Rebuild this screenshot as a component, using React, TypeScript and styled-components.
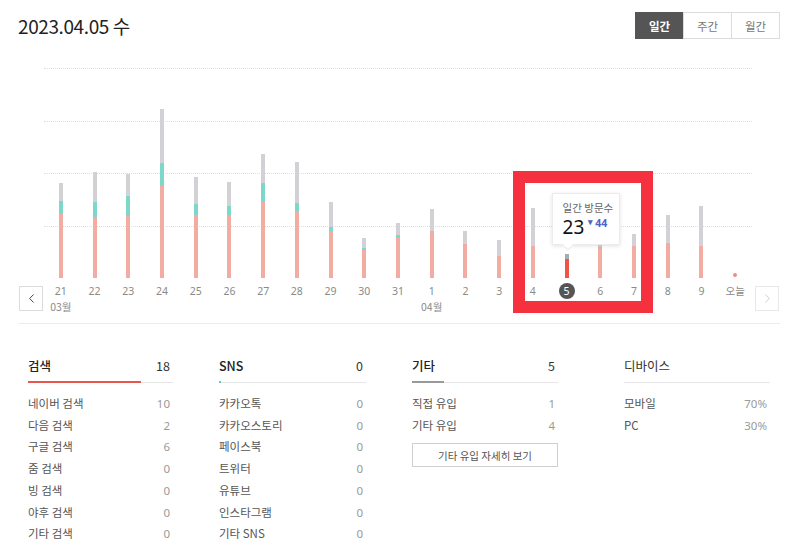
import React from "react"
import styled, {createGlobalStyle} from "styled-components"
import {ChevronLeft, ChevronRight} from "lucide-react"

//region data
type Day = {label: string; red: number; teal: number; gray: number; month?: string; today?: boolean; selected?: boolean}

const days: Day[] = [
	{label: "21", red: 64, teal: 13, gray: 18, month: "03월"},
	{label: "22", red: 61, teal: 15, gray: 30},
	{label: "23", red: 62, teal: 20, gray: 22},
	{label: "24", red: 92, teal: 23, gray: 54},
	{label: "25", red: 63, teal: 11, gray: 27},
	{label: "26", red: 63, teal: 9, gray: 24},
	{label: "27", red: 76, teal: 19, gray: 29},
	{label: "28", red: 67, teal: 8, gray: 41},
	{label: "29", red: 47, teal: 4, gray: 25},
	{label: "30", red: 28, teal: 2, gray: 10},
	{label: "31", red: 40, teal: 3, gray: 12},
	{label: "1", red: 47, teal: 0, gray: 22, month: "04월"},
	{label: "2", red: 34, teal: 0, gray: 13},
	{label: "3", red: 22, teal: 0, gray: 16},
	{label: "4", red: 32, teal: 0, gray: 38},
	{label: "5", red: 19, teal: 0, gray: 5, selected: true},
	{label: "6", red: 31, teal: 0, gray: 40},
	{label: "7", red: 32, teal: 0, gray: 12},
	{label: "8", red: 35, teal: 0, gray: 28},
	{label: "9", red: 32, teal: 0, gray: 40},
	{label: "오늘", red: 0, teal: 0, gray: 0, today: true},
]

type StatGroup = {
	title: string
	total?: number
	color: string
	width: number
	offset: number
	rows: [string, string][]
	more?: string
}

const groups: StatGroup[] = [
	{
		title: "검색",
		total: 18,
		color: "#e8574b",
		width: 145,
		offset: 0,
		rows: [
			["네이버 검색", "10"],
			["다음 검색", "2"],
			["구글 검색", "6"],
			["줌 검색", "0"],
			["빙 검색", "0"],
			["야후 검색", "0"],
			["기타 검색", "0"],
		],
	},
	{
		title: "SNS",
		total: 0,
		color: "#5fcfbd",
		width: 147,
		offset: 46,
		rows: [
			["카카오톡", "0"],
			["카카오스토리", "0"],
			["페이스북", "0"],
			["트위터", "0"],
			["유튜브", "0"],
			["인스타그램", "0"],
			["기타 SNS", "0"],
		],
	},
	{
		title: "기타",
		total: 5,
		color: "#9a9a9a",
		width: 146,
		offset: 46,
		rows: [
			["직접 유입", "1"],
			["기타 유입", "4"],
		],
		more: "기타 유입 자세히 보기",
	},
	{
		title: "디바이스",
		color: "#e6e6e6",
		width: 146,
		offset: 66,
		rows: [
			["모바일", "70%"],
			["PC", "30%"],
		],
	},
]
const grandTotal = 23
//endregion

//region atoms
const GlobalStyle = createGlobalStyle`
	* { box-sizing: border-box; }
	body {
		margin: 0;
		background: #fff;
		font-family: "Noto Sans CJK KR", "Noto Sans", sans-serif;
		color: #333;
	}
`

const Page = styled.div`
	position: relative;
	width: 800px;
	height: 551px;
	padding: 12px 20px 0 18px;
	overflow: hidden;
`

const Header = styled.header`
	display: flex;
	align-items: center;
	justify-content: space-between;
	height: 27px;
`

const Title = styled.h1`
	margin: 0;
	font-size: 19px;
	font-weight: 400;
	letter-spacing: -0.4px;
	color: #222;
	line-height: 27px;
`

const Segmented = styled.div`
	display: flex;
`

const SegButton = styled.button<{$active?: boolean}>`
	width: 49px;
	height: 27px;
	border: 1px solid ${({$active}) => ($active ? "#555" : "#dcdcdc")};
	margin-left: -1px;
	background: ${({$active}) => ($active ? "#555" : "#fff")};
	color: ${({$active}) => ($active ? "#fff" : "#777")};
	font-family: inherit;
	font-size: 11.5px;
	font-weight: ${({$active}) => ($active ? 700 : 400)};
	padding: 0;
`
//endregion

//region chart
const Chart = styled.section`
	display: flex;
	margin-top: 29px;
`

const NavCell = styled.div<{$right?: boolean}>`
	display: flex;
	align-items: flex-end;
	margin: ${({$right}) => ($right ? "0 0 4px 3px" : "0 1px 4px 1px")};
`

const NavButton = styled.button<{$disabled?: boolean}>`
	display: grid;
	place-content: center;
	width: 24px;
	height: 25px;
	padding: 0;
	border: 1px solid ${({$disabled}) => ($disabled ? "#e8e8e8" : "#dcdcdc")};
	background: #fff;
	color: ${({$disabled}) => ($disabled ? "#cfcfcf" : "#444")};
`

const ChartBody = styled.div`
	width: 708px;
`

const Plot = styled.div`
	display: grid;
	height: 210px;
`

const GridLines = styled.div`
	grid-area: 1 / 1;
	display: grid;
	grid-template-rows: repeat(4, 1fr);
`

const GridLine = styled.div`
	border-top: 1px dotted #dedede;
`

const Columns = styled.div`
	grid-area: 1 / 1;
	display: grid;
	grid-template-columns: repeat(21, 1fr);
`

const BarColumn = styled.div`
	position: relative;
	display: flex;
	flex-direction: column;
	align-items: center;
	justify-content: flex-end;
`

const Segment = styled.div<{$color: string}>`
	width: 4px;
	background: ${({$color}) => $color};
`

const TodayDot = styled.div`
	width: 4px;
	height: 4px;
	margin-bottom: 1px;
	border-radius: 50%;
	background: #ef8b80;
`

const Tooltip = styled.div`
	position: absolute;
	left: calc(50% - 15px);
	bottom: 33px;
	z-index: 2;
	width: 68px;
	height: 52px;
	padding: 7px 0 0 10px;
	background: #fff;
	border: 1px solid #ececec;
	box-shadow: 0 1px 4px rgba(0, 0, 0, 0.12);

	&::after {
		// arrow towards the bar
		content: "";
		position: absolute;
		left: 11px;
		bottom: -5px;
		width: 7px;
		height: 7px;
		background: #fff;
		border-right: 1px solid #ececec;
		border-bottom: 1px solid #ececec;
		transform: rotate(45deg);
	}
`

const TipLabel = styled.div`
	font-size: 10.5px;
	line-height: 14px;
	color: #666;
	white-space: nowrap;
`

const TipValue = styled.div`
	display: flex;
	align-items: flex-start;
	gap: 4px;
	margin-top: 2px;
`

const TipNumber = styled.span`
	font-family: "Noto Sans", sans-serif;
	font-size: 19px;
	line-height: 20px;
	color: #111;
`

const TipDiff = styled.span`
	font-family: "Noto Sans", sans-serif;
	font-size: 10.5px;
	font-weight: 700;
	line-height: 13px;
	color: #4a64c9;

	&::before {
		content: "▾";
		font-size: 9px;
		margin-right: 2px;
		position: relative;
		top: -2px;
	}
`

const Labels = styled.div`
	display: grid;
	grid-template-columns: repeat(21, 1fr);
`

const LabelCell = styled.div`
	display: flex;
	flex-direction: column;
	align-items: center;
	padding-top: 6px;
	height: 37px;
`

const DayLabel = styled.span<{$selected?: boolean}>`
	display: grid;
	place-content: center;
	height: 16px;
	min-width: 16px;
	margin-top: -1px;
	border-radius: 50%;
	font-family: "Noto Sans", "Noto Sans CJK KR", sans-serif;
	font-size: 10.5px;
	line-height: 16px;
	color: ${({$selected}) => ($selected ? "#fff" : "#8a8a8a")};
	background: ${({$selected}) => ($selected ? "#555" : "transparent")};
`

const MonthLabel = styled.span`
	font-size: 10.5px;
	line-height: 16px;
	color: #8a8a8a;
`

const Divider = styled.hr`
	margin: 8px 0 0;
	border: none;
	border-top: 1px solid #ececec;
`
//endregion

//region stats
const Stats = styled.section`
	display: flex;
	padding-left: 10px;
	margin-top: 32px;
`

const StatCol = styled.div<{$width: number; $offset: number}>`
	flex: none;
	width: ${({$width}) => $width}px;
	margin-left: ${({$offset}) => $offset}px;
`

const StatHead = styled.div`
	display: flex;
	justify-content: space-between;
	padding-right: 3px;
	line-height: 20px;
	font-size: 12.5px;
	font-weight: 500;
	color: #222;

	span:last-child {
		font-weight: 400;
		color: #333;
	}
`

const Track = styled.div`
	display: flex;
	align-items: center;
	height: 2px;
	margin-top: 5px;
	background: linear-gradient(#fff 0 50%, #e6e6e6 50% 100%);
`

const Fill = styled.div<{$color: string}>`
	height: 2px;
	min-width: 2px;
	background: ${({$color}) => $color};
`

const Rows = styled.ul`
	margin: 10px 0 0;
	padding: 0;
	list-style: none;
`

const Row = styled.li`
	display: flex;
	justify-content: space-between;
	padding-right: 3px;
	font-size: 11.5px;
	line-height: 21.7px;
	color: #555;

	span:last-child {
		color: #9a9a9a;
		font-family: "Noto Sans", sans-serif;
	}
`

const MoreButton = styled.button`
	width: 100%;
	height: 24px;
	margin-top: 7px;
	padding: 0;
	border: 1px solid #cfcfcf;
	background: #fff;
	font-family: inherit;
	font-size: 10.5px;
	color: #555;
`
//endregion

// the red annotation frame that lies over the chart
const Highlight = styled.div`
	position: absolute;
	left: 513px;
	top: 171px;
	width: 140px;
	height: 142px;
	border: 12px solid #f5303f;
	pointer-events: none;
	z-index: 3;
`

export default function App() {
	return (
		<>
			<GlobalStyle />
			<Page>
				<Header>
					<Title>2023.04.05 수</Title>
					<Segmented>
						<SegButton $active>일간</SegButton>
						<SegButton>주간</SegButton>
						<SegButton>월간</SegButton>
					</Segmented>
				</Header>

				<Chart>
					<NavCell>
						<NavButton>
							<ChevronLeft size={15} strokeWidth={1.6} />
						</NavButton>
					</NavCell>
					<ChartBody>
						<Plot>
							<GridLines>
								<GridLine />
								<GridLine />
								<GridLine />
								<GridLine />
							</GridLines>
							<Columns>
								{days.map((d) => (
									<BarColumn key={d.label}>
										{d.selected && (
											<Tooltip>
												<TipLabel>일간 방문수</TipLabel>
												<TipValue>
													<TipNumber>23</TipNumber>
													<TipDiff>44</TipDiff>
												</TipValue>
											</Tooltip>
										)}
										{d.today ? (
											<TodayDot />
										) : (
											<>
												<Segment
													$color={d.selected ? "#a5acb8" : "#d2d2d6"}
													style={{height: d.gray}}
												/>
												{d.teal > 0 && <Segment $color="#7ed8c9" style={{height: d.teal}} />}
												<Segment
													$color={d.selected ? "#ef5546" : "#f3aca2"}
													style={{height: d.red}}
												/>
											</>
										)}
									</BarColumn>
								))}
							</Columns>
						</Plot>
						<Labels>
							{days.map((d) => (
								<LabelCell key={d.label}>
									<DayLabel $selected={d.selected}>{d.label}</DayLabel>
									{d.month && <MonthLabel>{d.month}</MonthLabel>}
								</LabelCell>
							))}
						</Labels>
					</ChartBody>
					<NavCell $right>
						<NavButton $disabled>
							<ChevronRight size={15} strokeWidth={1.6} />
						</NavButton>
					</NavCell>
				</Chart>

				<Divider />

				<Stats>
					{groups.map((g) => (
						<StatCol key={g.title} $width={g.width} $offset={g.offset}>
							<StatHead>
								<span>{g.title}</span>
								{g.total !== undefined && <span>{g.total}</span>}
							</StatHead>
							<Track>
								{g.total !== undefined && (
									<Fill $color={g.color} style={{width: `${(g.total / grandTotal) * 100}%`}} />
								)}
							</Track>
							<Rows>
								{g.rows.map(([label, value]) => (
									<Row key={label}>
										<span>{label}</span>
										<span>{value}</span>
									</Row>
								))}
							</Rows>
							{g.more && <MoreButton>{g.more}</MoreButton>}
						</StatCol>
					))}
				</Stats>

				<Highlight />
			</Page>
		</>
	)
}
